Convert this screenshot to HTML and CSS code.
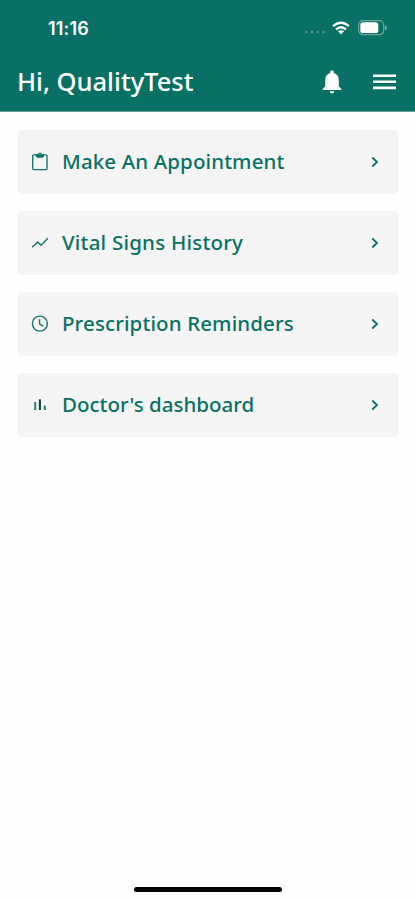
FILE: index.html
```html
<!DOCTYPE html>
<html lang="en">
<head>
<meta charset="utf-8">
<title>Home</title>
<link rel="stylesheet" href="styles.css">
</head>
<body>
<header class="header">
  <div class="status">
    <span class="time">11:16</span>
    <svg class="signal" viewBox="0 0 22 4"><circle cx="2.2" cy="2" r="1.5"/><circle cx="8" cy="2" r="1.5"/><circle cx="13.8" cy="2" r="1.5"/><circle cx="19.6" cy="2" r="1.5"/></svg>
    <svg class="wifi" viewBox="0 0 18 14"><g fill="none" stroke="#fff" stroke-width="2.4"><path d="M1 5.2Q9-1.8 17 5.2"/><path d="M4 8.4Q9 4 14 8.4"/></g><path d="M5.9 10.3Q9 8 12.1 10.3L9 13.6Z" fill="#fff"/></svg>
    <svg class="battery" viewBox="0 0 30 16"><rect x=".7" y=".7" width="25" height="14" rx="4.2" fill="none" stroke="#6da69f" stroke-width="1.2"/><rect x="2.3" y="2.3" width="18" height="10.8" rx="2.6" fill="#fff"/><path d="M27 5.2Q29 6 29 7.7T27 10.2Z" fill="#6da69f"/></svg>
  </div>
  <div class="bar">
    <h1 class="title">Hi, QualityTest</h1>
    <svg class="bell" viewBox="0 0 20 24"><path d="M10 .5C8.9.5 8.2 1.2 8.2 2.2V3C5 3.8 3.2 6.5 3.2 10V16.3L.7 18.8V20H19.3V18.8L16.8 16.3V10C16.8 6.5 15 3.8 11.8 3V2.2C11.8 1.2 11.1.5 10 .5ZM7.8 21.2A2.2 2.2 0 0 0 12.2 21.2Z" fill="#fff"/></svg>
    <svg class="menu" viewBox="0 0 23 16"><path d="M0 1.7H23M0 7.8H23M0 13.9H23" stroke="#fff" stroke-width="2.6"/></svg>
  </div>
</header>
<main class="list">
  <a class="card">
    <svg class="icon" viewBox="0 0 18 20"><path d="M5.8 2.9H2.8Q1.7 2.9 1.7 4V16.5Q1.7 17.6 2.8 17.6H14.9Q16 17.6 16 16.5V4Q16 2.9 14.9 2.9H11.8" class="line"/><path d="M4.8 2.3H6.8Q7.2.4 8.9.4T11 2.3H13V4.2L11.7 5.8H6.1L4.8 4.2Z" fill="#087064"/><circle cx="8.9" cy="2.1" r=".6" fill="#f5f5f5"/></svg>
    <span class="label appointment">Make An Appointment</span>
    <svg class="chevron" viewBox="0 0 8 12"><path d="M1.3 1.5L6 6L1.3 10.5"/></svg>
  </a>
  <a class="card">
    <svg class="icon" viewBox="0 0 18 20"><path d="M1.2 14.3L6.7 8.9L10.1 12.2L16.8 5.2" class="line"/></svg>
    <span class="label vitals">Vital Signs History</span>
    <svg class="chevron" viewBox="0 0 8 12"><path d="M1.3 1.5L6 6L1.3 10.5"/></svg>
  </a>
  <a class="card">
    <svg class="icon" viewBox="0 0 18 20"><circle cx="8.9" cy="9.6" r="7.5" class="line"/><path d="M8.6 5.2V10L12.3 12.2" class="line"/></svg>
    <span class="label reminders">Prescription Reminders</span>
    <svg class="chevron" viewBox="0 0 8 12"><path d="M1.3 1.5L6 6L1.3 10.5"/></svg>
  </a>
  <a class="card">
    <svg class="icon" viewBox="0 0 18 20"><path d="M4.2 7V15" stroke="#287c6e" stroke-width="2"/><path d="M8.9 4.3V15" stroke="#06483f" stroke-width="2.1"/><path d="M13.8 10.5V15" stroke="#287c6e" stroke-width="2"/></svg>
    <span class="label dashboard">Doctor's dashboard</span>
    <svg class="chevron" viewBox="0 0 8 12"><path d="M1.3 1.5L6 6L1.3 10.5"/></svg>
  </a>
</main>
<div class="home-indicator"></div>
</body>
</html>
```
FILE: styles.css
```css
* { box-sizing: border-box; }
body {
  margin: 0;
  height: 900px;
  display: flex;
  flex-direction: column;
  background: #fefefe;
  font-family: "Noto Sans", sans-serif;
  overflow: hidden;
}
svg { display: block; flex: none; }
.header {
  height: 112px;
  background: #087064;
  border-bottom: 1px solid #6b9e97;
  color: #fff;
}
.status {
  height: 56px;
  padding: 0 27px 0 48px;
  display: flex;
  align-items: center;
}
.time {
  font: 600 18px/20px Inter, sans-serif;
  letter-spacing: .2px;
  padding-top: 1px;
  flex: 1;
}
.signal { width: 22px; height: 4px; margin: 8px 6px 0 0; fill: #4b9188; }
.wifi { width: 18px; height: 14px; margin-right: 8px; }
.battery { width: 30px; height: 16px; }
.bar {
  height: 52px;
  padding: 0 19px 0 17px;
  display: flex;
  align-items: center;
}
.title {
  margin: 0;
  padding-bottom: 2px;
  flex: 1;
  font-size: 25.5px;
  font-weight: 500;
  line-height: 34px;
  letter-spacing: 0;
  white-space: nowrap;
}
.bell { width: 20px; height: 24px; margin-right: 31px; }
.menu { width: 23px; height: 16px; }
.list {
  padding: 18px 17px 0 18px;
  display: flex;
  flex-direction: column;
  gap: 17px;
}
.card {
  height: 64px;
  padding: 0 19px 0 13px;
  display: flex;
  align-items: center;
  background: #f5f5f5;
  border-radius: 4px;
  color: #087064;
}
.icon { width: 18px; height: 20px; margin-right: 13px; }
.line { fill: none; stroke: #1b7669; stroke-width: 1.4; }
.label {
  flex: 1;
  padding-bottom: 2px;
  font-size: 20.5px;
  font-weight: 500;
  line-height: 28px;
  white-space: nowrap;
}
.appointment { letter-spacing: .12px; }
.vitals { letter-spacing: .22px; }
.reminders { letter-spacing: .12px; }
.chevron { width: 8px; height: 12px; fill: none; stroke: #087064; stroke-width: 1.8; }
.home-indicator {
  width: 148px;
  height: 5px;
  margin: auto auto 8px 134px;
  border-radius: 3px;
  background: #000;
}
```
